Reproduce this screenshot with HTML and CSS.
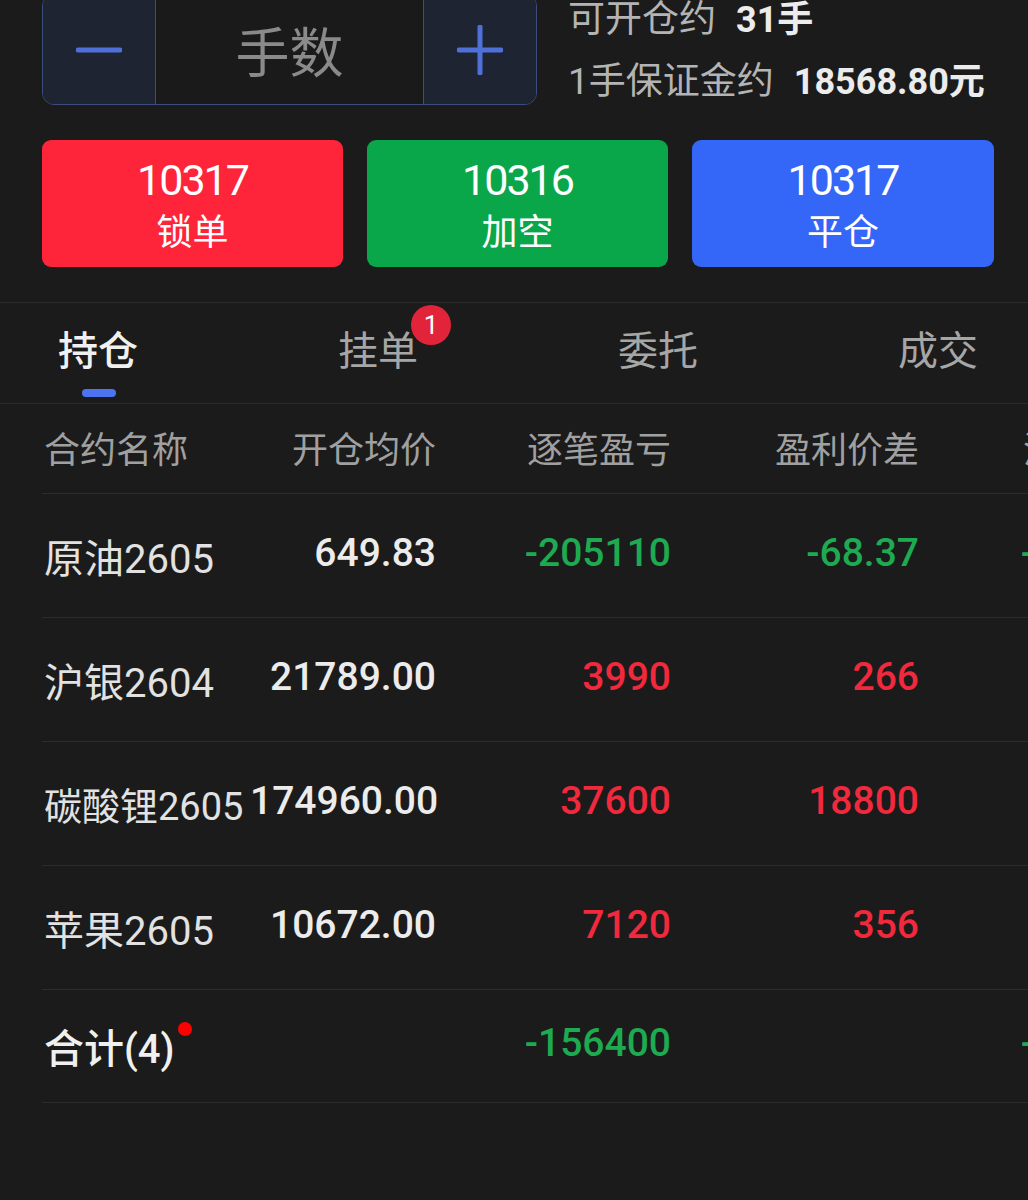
FILE: index.html
```html
<!DOCTYPE html>
<html lang="zh-CN">
<head>
    <meta charset="UTF-8">
    <meta name="viewport" content="width=device-width, initial-scale=1.0">
    <title>持仓</title>
    <link rel="stylesheet" href="styles.css">
</head>
<body>
    <div class="order-top">
        <div class="stepper">
            <div class="step-btn">
                <svg width="46" height="46" viewBox="0 0 46 46"><line x1="2" y1="23" x2="44" y2="23" /></svg>
            </div>
            <div class="step-input">手数</div>
            <div class="step-btn">
                <svg width="46" height="50" viewBox="0 0 46 50"><line x1="2" y1="25" x2="44" y2="25" /><line x1="23" y1="2" x2="23" y2="48" /></svg>
            </div>
        </div>
        <div class="order-info">
            <div class="info-line"><span class="info-label">可开仓约</span><span class="info-value">31手</span></div>
            <div class="info-line info-second"><span class="info-label">1手保证金约</span><span class="info-value">18568.80元</span></div>
        </div>
    </div>

    <div class="actions">
        <div class="action action-red">
            <div class="action-price">10317</div>
            <div class="action-name">锁单</div>
        </div>
        <div class="action action-green">
            <div class="action-price">10316</div>
            <div class="action-name">加空</div>
        </div>
        <div class="action action-blue">
            <div class="action-price">10317</div>
            <div class="action-name">平仓</div>
        </div>
    </div>

    <div class="tabs">
        <div class="tab active">持仓<span class="tab-bar"></span></div>
        <div class="tab">挂单<span class="badge">1</span></div>
        <div class="tab">委托</div>
        <div class="tab">成交</div>
    </div>

    <div class="positions">
        <div class="row head">
            <div class="cell name">合约名称</div>
            <div class="cell">开仓均价</div>
            <div class="cell">逐笔盈亏</div>
            <div class="cell">盈利价差</div>
            <div class="cell">浮动盈亏</div>
        </div>
        <div class="row">
            <div class="cell name">原油2605</div>
            <div class="cell num">649.83</div>
            <div class="cell num down">-205110</div>
            <div class="cell num down">-68.37</div>
            <div class="cell num down">-205110</div>
        </div>
        <div class="row">
            <div class="cell name">沪银2604</div>
            <div class="cell num">21789.00</div>
            <div class="cell num up">3990</div>
            <div class="cell num up">266</div>
            <div class="cell num up">3990</div>
        </div>
        <div class="row">
            <div class="cell name long">碳酸锂2605</div>
            <div class="cell num">174960.00</div>
            <div class="cell num up">37600</div>
            <div class="cell num up">18800</div>
            <div class="cell num up">37600</div>
        </div>
        <div class="row">
            <div class="cell name">苹果2605</div>
            <div class="cell num">10672.00</div>
            <div class="cell num up">7120</div>
            <div class="cell num up">356</div>
            <div class="cell num up">7120</div>
        </div>
        <div class="row total">
            <div class="cell name"><span class="total-label">合计(4)<span class="dot"></span></span></div>
            <div class="cell"></div>
            <div class="cell num down">-156400</div>
            <div class="cell"></div>
            <div class="cell num down">-156400</div>
        </div>
    </div>
</body>
</html>
```

FILE: styles.css
```css
body {
    margin: 0;
    background-color: #1b1b1b;
    font-family: Roboto, "Noto Sans CJK SC", sans-serif;
    color: #e6e6e6;
    overflow: hidden;
    height: 1200px;
}

.order-top {
    display: flex;
    align-items: flex-start;
    padding-left: 42px;
}
.stepper {
    display: flex;
    width: 495px;
    height: 111px;
    margin-top: -6px;
    box-sizing: border-box;
    border: 1.5px solid #3b4c7e;
    border-radius: 12px;
    overflow: hidden;
}
.step-btn {
    width: 112px;
    display: flex;
    align-items: center;
    justify-content: center;
    background-color: #1f2433;
}
.step-btn svg line {
    stroke: #4f70d8;
    stroke-width: 5;
    stroke-linecap: round;
}
.step-input {
    flex: 1;
    display: flex;
    align-items: center;
    justify-content: center;
    border-left: 1.5px solid #3b4c7e;
    border-right: 1.5px solid #3b4c7e;
    font-size: 54px;
    color: #8a8a8a;
    background-color: #1a1a1a;
}
.order-info {
    margin-left: 31px;
}
.info-line {
    height: 40px;
    line-height: 40px;
    font-size: 37px;
    white-space: nowrap;
}
.info-second {
    margin-top: 22px;
}
.info-label {
    color: #b4b4b4;
    margin-right: 20px;
}
.info-value {
    color: #ececec;
    font-weight: 700;
    font-size: 36px;
}

.actions {
    display: grid;
    grid-template-columns: 301px 301px 302px;
    gap: 24px;
    margin: 35px 0 0 42px;
}
.action {
    height: 127px;
    border-radius: 9px;
    color: #fff;
    text-align: center;
    box-sizing: border-box;
    padding-top: 18px;
}
.action-red { background-color: #fe2439; }
.action-green { background-color: #0aa74a; }
.action-blue { background-color: #3466f7; }
.action-price {
    font-size: 43px;
    line-height: 44px;
    letter-spacing: -2px;
}
.action-name {
    margin-top: 9px;
    font-size: 36px;
    line-height: 44px;
}

.tabs {
    display: flex;
    gap: 200px;
    margin-top: 35px;
    padding-left: 58px;
    height: 100px;
    border-top: 1px solid #2b2b2b;
    border-bottom: 1px solid #2b2b2b;
}
.tab {
    position: relative;
    width: 80px;
    text-align: center;
    font-size: 40px;
    line-height: 98px;
    color: #a6a6a6;
    white-space: nowrap;
}
.tab.active {
    color: #f0f0f0;
    font-weight: 500;
}
.tab-bar {
    position: absolute;
    left: 24px;
    bottom: 6px;
    width: 34px;
    height: 8px;
    border-radius: 4px;
    background-color: #4d74f0;
}
.badge {
    position: absolute;
    left: 73px;
    top: 2px;
    width: 40px;
    height: 40px;
    border-radius: 50%;
    background-color: #e2243b;
    color: #fff;
    font-size: 26px;
    line-height: 40px;
    font-weight: 400;
}

.positions {
    margin-left: 42px;
}
.row {
    display: grid;
    grid-template-columns: 208px 186px 235px 248px 248px;
    align-items: center;
    height: 124px;
    box-sizing: border-box;
    border-bottom: 1px solid #2c2c2c;
    white-space: nowrap;
}
.row.head {
    height: 90px;
    padding-bottom: 4px;
}
.row.total {
    height: 113px;
}
.cell {
    text-align: right;
}
.cell.name {
    text-align: left;
    padding-left: 2px;
    font-size: 40px;
    color: #e2e2e2;
}
.cell.name.long {
    font-size: 38px;
}
.head .cell {
    font-size: 36px;
    color: #a0a0a0;
}
.num {
    font-size: 39px;
    font-weight: 500;
    color: #ececec;
    padding-bottom: 6px;
}
.num.down { color: #1eaa50; }
.num.up { color: #f1293d; }
.total-label {
    position: relative;
    font-weight: 500;
    color: #f0f0f0;
}
.dot {
    position: absolute;
    right: -17px;
    top: -4px;
    width: 14px;
    height: 14px;
    border-radius: 50%;
    background-color: #f00;
}
```
